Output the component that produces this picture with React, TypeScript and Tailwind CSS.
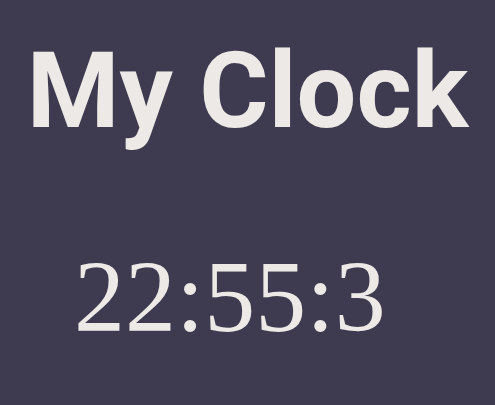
export default function App() {
  return (
    <div className="flex h-[405px] w-[495px] flex-col bg-[#3e3b50] text-[#ece9e6]">
      <h1 className="mt-[38px] text-center font-['Roboto',sans-serif] text-[106px] font-bold leading-none">
        My Clock
      </h1>
      <p className="mt-[102px] pl-[74px] font-['Liberation_Serif','Times_New_Roman',serif] text-[102px] leading-none">
        22:55:3
      </p>
    </div>
  );
}
